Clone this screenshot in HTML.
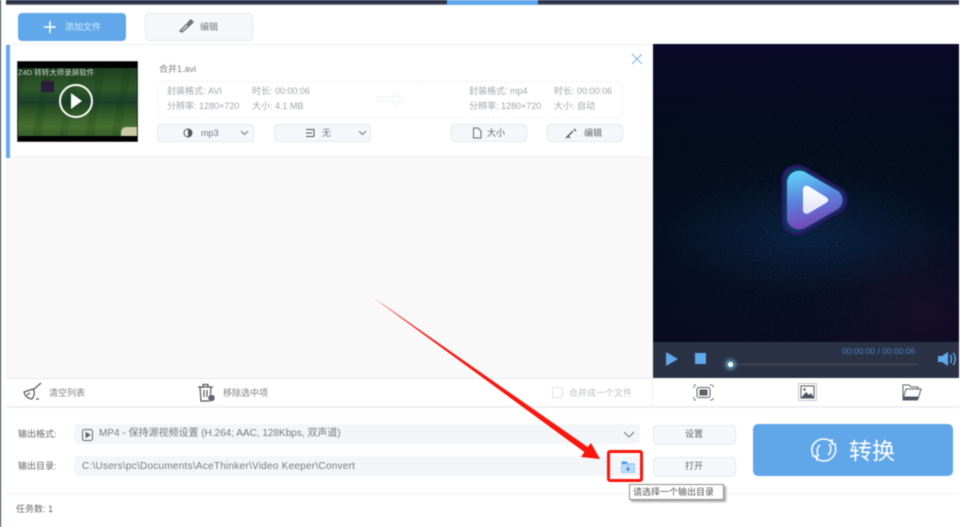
<!DOCTYPE html>
<html><head><meta charset="utf-8"><style>
html,body{margin:0;padding:0;background:#fff}
#p{position:relative;width:965px;height:527px;overflow:hidden;background:#fff;font-family:"Liberation Sans","Noto Sans CJK SC",sans-serif;color:#6f747a;font-size:9px;filter:blur(.45px)}
#p div,#p svg{position:absolute}
.t{white-space:nowrap;line-height:12px}
.b{box-sizing:border-box;background:#f5f7fa;border:1px solid #e5e9ee;border-radius:4px}
</style></head><body><div id="p">
<div style="left:0;top:0;width:1px;height:527px;background:#1d2c36"></div>
<div style="left:6px;top:0;width:953px;height:4px;background:#2c3249"></div>
<div style="left:6px;top:4px;width:953px;height:1px;background:#7f8591"></div>
<div style="left:447px;top:0;width:91px;height:5px;background:#60a8ea"></div>

<div style="left:18px;top:13px;width:108px;height:28px;background:#60a8ea;border-radius:4px"></div>
<svg style="left:43px;top:20px" width="14" height="14"><path d="M7 1v12M1 7h12" stroke="#fff" stroke-width="1.6"/></svg>
<div class="t" style="left:65px;top:21px;color:#d6e8f9">添加文件</div>
<div class="b" style="left:145px;top:13px;width:108px;height:28px"></div>
<svg style="left:178px;top:18px" width="16" height="16" fill="none" stroke="#555" stroke-width="1.2"><path d="M2 13l7-7 2 2-7 6zM10 5l3-3 2 2-3 3z"/><path d="M11 3l2 2" stroke-width="2"/></svg>
<div class="t" style="left:200px;top:21px;color:#777">编辑</div>

<div style="left:6px;top:44px;width:647px;height:1px;background:#edf0f3"></div>
<div style="left:6px;top:157px;width:647px;height:221px;background:#f9f9fa"></div>
<div style="left:6px;top:156px;width:647px;height:1px;background:#eef1f5"></div>
<div style="left:6px;top:45px;width:4px;height:113px;background:#65a9ec"></div>

<div style="left:17px;top:61px;width:121px;height:81px;background:#000;box-shadow:inset 0 0 0 .5px #777"></div>
<div style="left:18px;top:68px;width:119px;height:68px;background:linear-gradient(180deg,#1f3f22 0%,#2f5a2a 30%,#1c3f2a 50%,#2d5426 62%,#466f30 85%,#35602a 100%)"></div>
<div style="left:18px;top:68px;width:119px;height:68px;background:repeating-linear-gradient(100deg,rgba(10,40,15,.14) 0 8px,transparent 8px 26px)"></div>
<div style="left:121px;top:127px;width:16px;height:9px;background:#c9c9a6;border-radius:5px 0 0 0"></div>
<div class="t" style="left:18px;top:67px;color:#cfdccb;font-size:7.5px">Z4D 转转大师录屏软件</div>
<div style="left:41px;top:81px;width:13px;height:11px;background:#2a1d3c"></div>
<svg style="left:58px;top:83px" width="36" height="36"><circle cx="18" cy="18" r="16" fill="none" stroke="#fff" stroke-width="2"/><path d="M13 10l11 8-11 8z" fill="#fff"/></svg>

<div class="t" style="left:159px;top:63px;color:#808080">合并1.avi</div>
<div style="left:157px;top:81px;width:466px;height:37px;box-sizing:border-box;border:1px dashed #eceef2;border-radius:4px"></div>
<div class="t" style="left:167px;top:85px;color:#a3a6ab">封装格式: AVI</div>
<div class="t" style="left:252px;top:85px;color:#a3a6ab">时长: 00:00:06</div>
<div class="t" style="left:167px;top:100px;color:#a3a6ab">分辨率: 1280×720</div>
<div class="t" style="left:252px;top:100px;color:#a3a6ab">大小: 4.1 MB</div>
<div class="t" style="left:469px;top:85px;color:#a3a6ab">封装格式: mp4</div>
<div class="t" style="left:554px;top:85px;color:#a3a6ab">时长: 00:00:06</div>
<div class="t" style="left:469px;top:100px;color:#a3a6ab">分辨率: 1280×720</div>
<div class="t" style="left:554px;top:100px;color:#a3a6ab">大小: 自动</div>
<svg style="left:376px;top:91px" width="29" height="17" fill="none" stroke="#eef0f3"><path d="M1 6h17V2l9 6-9 7v-5H1z"/></svg>
<svg style="left:631px;top:53px" width="12" height="12" stroke="#79b6ee" stroke-width="1.1"><path d="M1 1l10 10M11 1L1 11"/></svg>

<div class="b" style="left:157px;top:124px;width:97px;height:18px"></div>
<svg style="left:183px;top:128px" width="10" height="10"><circle cx="5" cy="5" r="4" fill="none" stroke="#555"/><path d="M5 1a4 4 0 0 1 0 8z" fill="#555"/></svg>
<div class="t" style="left:201px;top:127px">mp3</div>
<svg style="left:240px;top:130px" width="9" height="6" fill="none" stroke="#777"><path d="M1 1l3.500 3.500L8 1"/></svg>
<div class="b" style="left:274px;top:124px;width:97px;height:18px"></div>
<svg style="left:305px;top:128px" width="11" height="10" fill="none" stroke="#555"><path d="M1 1.500h8v7M1 5h6M1 8.500h8"/></svg>
<div class="t" style="left:322px;top:127px">无</div>
<svg style="left:358px;top:130px" width="9" height="6" fill="none" stroke="#777"><path d="M1 1l3.500 3.500L8 1"/></svg>
<div class="b" style="left:451px;top:124px;width:76px;height:18px"></div>
<svg style="left:472px;top:127px" width="10" height="12" fill="none" stroke="#666"><path d="M1.500 1h4.500l3 3v7h-7.500z"/></svg>
<div class="t" style="left:487px;top:127px;color:#666">大小</div>
<div class="b" style="left:547px;top:124px;width:76px;height:18px"></div>
<svg style="left:565px;top:127px" width="13" height="12" fill="none" stroke="#555" stroke-width="1.300"><path d="M1 11l7-7M9 2l2 2M3 9l2 2"/></svg>
<div class="t" style="left:584px;top:127px;color:#666">编辑</div>

<div style="left:653px;top:44px;width:306px;height:298px;background:radial-gradient(ellipse 150px 60px at 50% 64%,rgba(12,55,100,.4),transparent),radial-gradient(ellipse 120px 100px at 90% 90%,rgba(40,12,50,.4),transparent),linear-gradient(180deg,#0a0928 0%,#030c1b 35%,#040e20 65%,#090c20 100%)"></div>
<svg style="left:653px;top:44px" width="306" height="298"><filter id="s"><feTurbulence type="fractalNoise" baseFrequency=".8" numOctaves="2" seed="4"/><feColorMatrix values="0 0 0 0 .2 0 0 0 0 .45 0 0 0 0 .75 3 0 0 0 -1.550"/></filter><mask id="m"><rect width="306" height="298" fill="url(#g)"/></mask><radialGradient id="g" cx=".5" cy=".62" r=".6"><stop offset="0" stop-color="#fff"/><stop offset=".7" stop-color="#666"/><stop offset="1" stop-color="#000"/></radialGradient><rect width="306" height="298" filter="url(#s)" mask="url(#m)" opacity=".22"/></svg>
<svg style="left:778px;top:164px" width="72" height="72"><defs><linearGradient id="l" x1=".3" y1="0" x2=".5" y2="1"><stop offset="0" stop-color="#5fd0f7"/><stop offset=".5" stop-color="#5b7fdc"/><stop offset="1" stop-color="#7b3fb4"/></linearGradient><linearGradient id="w" x1="0" y1="0" x2="0" y2="1"><stop offset="0" stop-color="#fff"/><stop offset="1" stop-color="#dfe2f8"/></linearGradient></defs><path d="M5 17C5 5 16-1 26 4L62 25C70 30 70 42 62 47L26 68C16 73 5 67 5 55Z" fill="#0d3b5f" stroke="#281a66" stroke-width="3"/><path d="M9 19C9 9 19 4 27 8L60 27C66 32 66 40 60 45L27 64C19 68 9 63 9 54Z" fill="url(#l)"/><path d="M25 26C25 22 28 21 31 22.500L48 33C51 35 51 37 48 39L31 49C28 51 25 49 25 46Z" fill="url(#w)"/></svg>

<div style="left:653px;top:342px;width:306px;height:36px;background:#2b3245"></div>
<svg style="left:666px;top:352px" width="12" height="14"><path d="M0 0l12 7-12 7z" fill="#5fa8ec"/></svg>
<div style="left:695px;top:353px;width:11px;height:11px;background:#5fa8ec"></div>
<div style="left:730px;top:364px;width:188px;height:1px;background:#4c5157"></div>
<div style="left:728px;top:362px;width:5px;height:5px;border-radius:50%;background:#fff;box-shadow:0 0 5px 2px #6fc4e6"></div>
<div class="t" style="left:842px;top:345px;color:#4a7fc0;font-size:8.500px">00:00:00 / 00:00:06</div>
<svg style="left:938px;top:351px" width="19" height="16" fill="none"><path d="M0 5h4l6-4v14l-6-4H0z" fill="#5fa8ec"/><path d="M12 4c2 2 2 6 0 8M15 2c3 3 3 9 0 12" stroke="#5fa8ec" stroke-width="1.400"/></svg>

<div style="left:6px;top:378px;width:647px;height:1px;background:#e6e9ee"></div>
<div style="left:6px;top:406px;width:953px;height:2px;background:#eef0f3"></div>
<div style="left:652px;top:379px;width:1px;height:27px;background:#eceff2"></div>
<svg style="left:22px;top:382px" width="22" height="20" fill="none" stroke="#555" stroke-width="1.200"><path d="M19 1L11 8M11 7L2 10c1 4 3 6 8 7 2-3 3-5 2-8zM5 13l3-2M14 17h3"/></svg>
<div class="t" style="left:49px;top:387px;color:#808080">清空列表</div>
<svg style="left:197px;top:383px" width="19" height="20" fill="none" stroke="#555" stroke-width="1.200"><path d="M1 4h15M6 4V1.500h5V4M3 4l1 14h9l1-14M7 7v7M10 7v7"/><circle cx="14.500" cy="15" r="3.500" fill="#5a6470" stroke="#fff" stroke-width=".5"/></svg>
<div class="t" style="left:223px;top:387px;color:#808080">移除选中项</div>
<div style="left:552px;top:387px;width:11px;height:11px;box-sizing:border-box;border:1px solid #e0e3e7;border-radius:2px"></div>
<div class="t" style="left:569px;top:387px;color:#bcbfc3">合并成一个文件</div>

<svg style="left:693px;top:384px" width="21" height="17" fill="none" stroke="#5b6068"><rect x="4" y="3.500" width="13" height="10" rx="2"/><rect x="7" y="6" width="7" height="5" fill="#5b6068"/><path d="M1 4V1h3M17 1h3v3M1 13v3h3M17 16h3v-3" stroke-dasharray="2 1"/></svg>
<svg style="left:798px;top:383px" width="19" height="18"><rect x=".5" y=".5" width="18" height="17" fill="none" stroke="#8a8e93" stroke-dasharray="1 1"/><rect x="3" y="3" width="13" height="12" fill="none" stroke="#555"/><path d="M3 15l5-6 3 3 2-2 3 5z" fill="#4b5460"/><circle cx="6.500" cy="6.500" r="1.200" fill="#4b5460"/></svg>
<svg style="left:902px;top:384px" width="20" height="17" fill="none" stroke="#5b6068"><path d="M1 15V1h6l2 2h7v2"/><path d="M1 15l3-10h15l-3 10z"/><path d="M1 13h15l-.6 3H1z" fill="#4b5460"/></svg>

<div class="t" style="left:18px;top:428px;color:#666">输出格式:</div>
<div class="t" style="left:18px;top:460px;color:#666">输出目录:</div>
<div style="left:74px;top:424px;width:566px;height:20px;background:#f3f6f9;border-radius:4px"></div>
<div style="left:74px;top:456px;width:566px;height:20px;background:#f3f6f9;border-radius:4px"></div>
<svg style="left:82px;top:429px" width="11" height="12" fill="none" stroke="#666"><rect x=".5" y=".5" width="10" height="11" rx="2"/><path d="M4 3.500l4 2.500-4 2.500z" fill="#666"/></svg>
<div class="t" style="left:99px;top:428px;color:#777;font-size:10px">MP4 - 保持源视频设置 (H.264; AAC, 128Kbps, 双声道)</div>
<div class="t" style="left:82px;top:461px;color:#777;font-size:10px;letter-spacing:.25px">C:\Users\pc\Documents\AceThinker\Video Keeper\Convert</div>
<svg style="left:623px;top:431px" width="12" height="7" fill="none" stroke="#777" stroke-width="1.100"><path d="M1 1l5 5 5-5"/></svg>
<svg style="left:621px;top:460px" width="14" height="13"><path d="M.5 1.500h5l1.500 2h6.500v2H.5z" fill="#4d97e6"/><rect x=".5" y="4" width="13" height="8.500" fill="#bcdcf7" stroke="#7eb6ee" stroke-width=".6"/><path d="M7 6v4M5.300 8.500L7 10.500 8.700 8.500" fill="none" stroke="#3c82c9"/></svg>

<div class="b" style="left:653px;top:425px;width:83px;height:20px"></div>
<div class="t" style="left:685px;top:428px;color:#666">设置</div>
<div class="b" style="left:653px;top:457px;width:83px;height:20px"></div>
<div class="t" style="left:685px;top:460px;color:#666">打开</div>
<div style="left:753px;top:424px;width:200px;height:52px;background:#60a7ea;border-radius:5px"></div>
<svg style="left:809px;top:436px" width="30" height="28" fill="none" stroke="#fff" stroke-width="1.500"><path d="M4 19C0 10 7 3 15 3c3 0 6 1 9 4M26 9c3 9-4 16-11 16-3 0-6-1-9-4M10 20c-3-3-2-9 1-11M20 8c3 3 2 9-1 11"/><path d="M23 3v5h4M3 20h5v5"/></svg>
<div class="t" style="left:849px;top:441px;color:#fff;font-size:23px;line-height:20px">转换</div>

<div style="left:6px;top:493px;width:953px;height:1px;background:#eef0f3"></div>
<div class="t" style="left:16px;top:503px;color:#666">任务数: 1</div>

<div style="left:629px;top:484px;width:95px;height:16px;box-sizing:border-box;background:#fff;border:1px solid #8e8e8e;box-shadow:2px 2px 2px #aaa"></div>
<div class="t" style="left:633px;top:486px;color:#555">请选择一个输出目录</div>
<div style="left:607px;top:450px;width:36px;height:32px;box-sizing:border-box;border:3px solid #f8160d;border-radius:3px"></div>
<svg style="left:0;top:0" width="965" height="527"><path d="M371 296L587.700 447 591 443 600 459 581 457 584.300 452Z" fill="#f8160d"/></svg>
</div></body></html>
